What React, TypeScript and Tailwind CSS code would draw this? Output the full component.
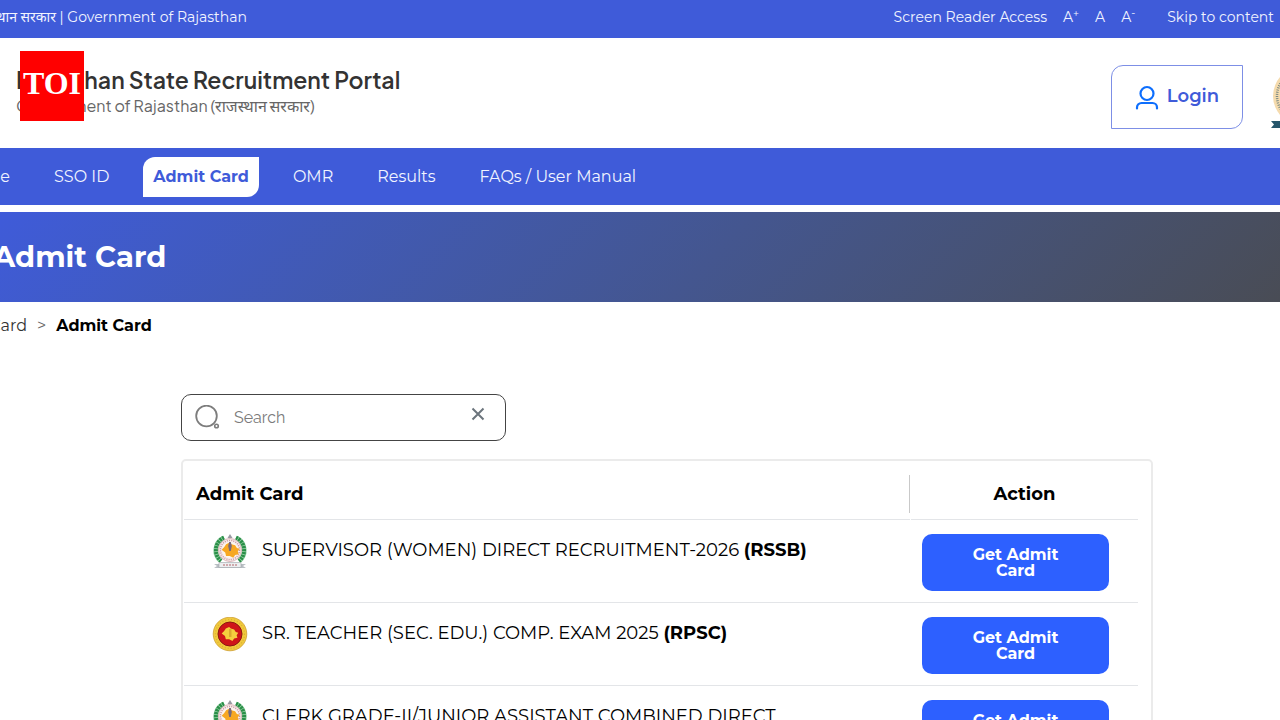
type Board = 'RSSB' | 'RPSC';

interface AdmitCard {
  id: number;
  title: string;
  board: Board;
}

const cards: AdmitCard[] = [
  { id: 1, title: 'SUPERVISOR (WOMEN) DIRECT RECRUITMENT-2026', board: 'RSSB' },
  { id: 2, title: 'SR. TEACHER (SEC. EDU.) COMP. EXAM 2025', board: 'RPSC' },
  { id: 3, title: 'CLERK GRADE-II/JUNIOR ASSISTANT COMBINED DIRECT RECRUITMENT', board: 'RSSB' },
];

const navItems = ['SSO ID', 'Admit Card', 'OMR', 'Results', 'FAQs / User Manual'];

const mapPath = 'M9 18 L12 15 L14 12 L18 10 L20 12 L24 13 L26 16 L29 17 L27 20 L28 23 L24 24 L22 27 L18 25 L14 25 L13 21 Z';

function RssbLogo() {
  return (
    <svg viewBox="0 0 36 36" className="h-9 w-9 shrink-0" aria-hidden="true">
      <path d="M12 4A13.500 13.500 0 0 0 9 27M24 4A13.500 13.500 0 0 1 27 27" fill="none" stroke="#9bd3aa" strokeWidth="5" />
      <path d="M12 3.500A14 14 0 0 0 9 27M24 3.500A14 14 0 0 1 27 27" fill="none" stroke="#2a8f48" strokeWidth="4" strokeDasharray="2.2 0.7" />
      <circle cx="18" cy="16" r="11.5" fill="#f6ecec" stroke="#d3a5aa" strokeWidth="0.8" />
      <circle cx="18" cy="16" r="9.6" fill="none" stroke="#c9959b" strokeWidth="1.4" strokeDasharray="1 1.2" />
      <circle cx="18" cy="16" r="8" fill="#fdf6ec" />
      <path d={mapPath} fill="#f7a823" transform="translate(1.500 -0.500) scale(0.9)" />
      <path d="M17.200 8h1.600l1 4-1 5h-1.600l-1-5z" fill="#77697c" />
      <path d="M18 0l2.500 4h-5z" fill="#9a9aa2" />
      <path d="M2 30h32l-3 2 3 2H2l3-2z" fill="#b9bec4" />
      <path d="M7 28.500h22v5H7z" fill="#eceef0" stroke="#9ea4aa" strokeWidth="0.6" />
      <path d="M11 31h14" stroke="#b4666c" strokeWidth="1.2" strokeDasharray="2 1" />
    </svg>
  );
}

function RpscLogo() {
  return (
    <svg viewBox="0 0 36 36" className="h-9 w-9 shrink-0" aria-hidden="true">
      <circle cx="18" cy="17" r="16.800" fill="#f0c93c" stroke="#cf9f35" strokeWidth="0.8" />
      <circle cx="18" cy="17" r="14.5" fill="none" stroke="#d9ad36" strokeWidth="1.2" strokeDasharray="1 2" />
      <circle cx="18" cy="17" r="12" fill="#cf1519" stroke="#8c1713" strokeWidth="1" />
      <path d={mapPath} fill="#f5cf3e" transform="translate(2.200 1.600) scale(0.83)" />
      <path d="M17 12h2.500v8H17z" fill="#dcab2e" />
    </svg>
  );
}

function StateEmblem() {
  return (
    <svg viewBox="0 0 60 64" className="h-16 w-[60px] shrink-0" aria-hidden="true">
      <circle cx="31" cy="31" r="29" fill="#f5dbad" />
      <circle cx="31" cy="31" r="25" fill="none" stroke="#7b8a84" strokeWidth="2.500" strokeDasharray="1 1.200" />
      <circle cx="31" cy="31" r="22" fill="#215468" />
      <path d="M0 56h60v7H0l3-3.500z" fill="#26566b" />
    </svg>
  );
}

function TopBar() {
  return (
    <div className="flex h-[38px] items-center justify-between bg-[#3f5bd9] pb-1 text-sm text-[#f1f4ff]">
      <div className="flex w-[247px] shrink-0 justify-end whitespace-nowrap">
        <p>राजस्थान सरकार | Government of Rajasthan</p>
      </div>
      <div className="flex items-center gap-4 pr-[6px] whitespace-nowrap">
        <a href="#reader">Screen Reader Access</a>
        <button type="button">A<sup>+</sup></button>
        <button type="button">A</button>
        <button type="button">A<sup>-</sup></button>
        <a href="#content" className="ml-4">Skip to content</a>
      </div>
    </div>
  );
}

function Header() {
  return (
    <header className="relative flex h-[110px] items-center justify-between pl-4">
      <div className="pb-1.5 font-['Plus_Jakarta_Sans','Inter','Noto_Sans',sans-serif]">
        <h1 className="text-[23px] leading-8 font-semibold text-[#333]">Rajasthan State Recruitment Portal</h1>
        <p className="text-base leading-5 text-[#666]">Government of Rajasthan (राजस्थान सरकार)</p>
      </div>
      <div className="absolute top-[13px] left-5 flex h-[70px] w-16 items-center justify-center bg-[#f00] pb-1.5">
        <span className="font-['Liberation_Serif',serif] text-[32px] leading-none font-bold text-white">TOI</span>
      </div>
      <div className="flex items-center gap-7 pt-2">
        <button
          type="button"
          className="flex h-16 w-[132px] items-center justify-center gap-2 rounded-tl-xl rounded-br-xl border border-[#7d8fe6] pb-0.5 text-lg font-semibold text-[#3f5bd9]"
        >
          <svg viewBox="0 0 24 26" className="mt-1 h-[26px] w-6" fill="none" stroke="#0d6efd" strokeWidth="2.2" strokeLinecap="round" aria-hidden="true">
            <circle cx="12" cy="8.500" r="6.500" />
            <path d="M2 23.500v-1a4.500 4.500 0 0 1 4.500-4.500h11a4.500 4.500 0 0 1 4.500 4.500v1" />
          </svg>
          Login
        </button>
        <div className="w-[9px] overflow-hidden">
          <StateEmblem />
        </div>
      </div>
    </header>
  );
}

function Nav() {
  return (
    <nav className="flex h-[57px] items-center gap-6 bg-[#3f5bd9] text-base whitespace-nowrap text-[#f1f4ff]">
      <div className="flex w-5 shrink-0 justify-end pr-[10px]">
        <a href="#home">Home</a>
      </div>
      {navItems.map((item) => (
        <a
          key={item}
          href="#nav"
          className={
            item === 'Admit Card'
              ? 'rounded-tl-xl rounded-br-xl bg-white px-[10px] py-2 font-bold text-[#3f5bd9]'
              : 'px-[10px] py-2'
          }
        >
          {item}
        </a>
      ))}
    </nav>
  );
}

function SearchBox() {
  return (
    <div className="flex h-[47px] w-[325px] items-center rounded-[10px] border border-[#444] px-3">
      <svg viewBox="0 0 26 26" className="h-[26px] w-[26px] shrink-0" fill="none" stroke="#7d7d7d" aria-hidden="true">
        <circle cx="12.500" cy="11" r="10.300" strokeWidth="1.800" />
        <circle cx="22.500" cy="21" r="1.800" strokeWidth="1.600" />
      </svg>
      <input
        type="text"
        aria-label="Search"
        placeholder="Search"
        className="ml-3.5 min-w-0 flex-1 bg-transparent font-['Raleway','Open_Sans',sans-serif] text-base outline-none placeholder:text-[#7b7b7b]"
      />
      <button type="button" aria-label="Clear search" className="mr-2 mb-2">
        <svg viewBox="0 0 14 14" className="h-3.5 w-3.5" stroke="#6c757d" strokeWidth="2" aria-hidden="true">
          <path d="M1.500 1.500l11 11M12.500 1.500l-11 11" />
        </svg>
      </button>
    </div>
  );
}

function CardTable() {
  return (
    <div className="mt-[18px] rounded-[5px] border-2 border-[#ebebeb] pr-[13px] pl-px">
      <table className="w-full table-fixed border-separate border-spacing-0">
        <thead>
          <tr className="text-lg text-black">
            <th className="p-0 text-left font-bold">
              <div className="mr-px border-b border-[#e3e5e8] pt-3.5 pb-1.5">
                <div className="flex h-[38px] items-center border-r border-[#c9c9c9] pl-3">Admit Card</div>
              </div>
            </th>
            <th className="w-[227px] p-0 font-bold">
              <div className="border-b border-[#e3e5e8] pt-3.5 pb-1.5">
                <div className="flex h-[38px] items-center justify-center">Action</div>
              </div>
            </th>
          </tr>
        </thead>
        <tbody>
          {cards.map((card) => (
            <tr key={card.id}>
              <td className="h-[83px] border-b border-[#e3e5e8] py-0 pr-16 pl-7 align-top">
                <div className="flex gap-3.5 pt-3.5">
                  {card.board === 'RSSB' ? <RssbLogo /> : <RpscLogo />}
                  <p className="pt-0.5 text-lg text-black">
                    {card.title} <strong className="font-bold">({card.board})</strong>
                  </p>
                </div>
              </td>
              <td className="border-b border-[#e3e5e8] py-0 pr-[29px] pl-[11px] align-top">
                <button
                  type="button"
                  className="mt-3.5 h-[57px] w-full rounded-[10px] bg-[#2d60ff] px-10 text-base leading-4 font-bold text-white"
                >
                  Get Admit Card
                </button>
              </td>
            </tr>
          ))}
        </tbody>
      </table>
    </div>
  );
}

export default function App() {
  return (
    <div className="h-screen overflow-hidden bg-white font-['Montserrat','Inter','Noto_Sans',sans-serif]">
      <TopBar />
      <Header />
      <Nav />
      <div className="mt-[7px] flex h-[90px] items-center bg-linear-135 from-[#3f5bd9] to-[#494c55]">
        <h2 className="-ml-[7px] text-[29px] font-bold text-white">Admit Card</h2>
      </div>
      <div className="flex h-12 items-center gap-[10px] text-base whitespace-nowrap">
        <div className="flex w-[27px] shrink-0 justify-end">
          <a href="#admit" className="text-[#333]">Admit Card</a>
        </div>
        <span className="text-[#666]">&gt;</span>
        <span className="font-bold text-black">Admit Card</span>
      </div>
      <main id="content" className="mt-11 mr-[127px] ml-[181px]">
        <SearchBox />
        <CardTable />
      </main>
    </div>
  );
}
